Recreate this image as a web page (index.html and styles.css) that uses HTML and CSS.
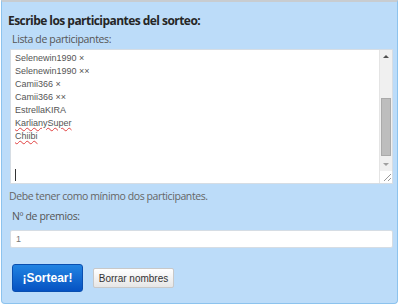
FILE: index.html
```html
<!DOCTYPE html>
<html lang="es">
<head>
<meta charset="utf-8">
<link rel="stylesheet" href="styles.css">
</head>
<body>
<div class="panel">
  <h2 class="title">Escribe los participantes del sorteo:</h2>
  <div class="label">Lista de participantes:</div>
  <div class="textarea">
    <div class="lines">
      <div>Selenewin1990 ×</div>
      <div>Selenewin1990 ××</div>
      <div>Camii366 ×</div>
      <div>Camii366 ××</div>
      <div>EstrellaKIRA</div>
      <div><span class="spell">KarlianySuper</span></div>
      <div><span class="spell">Chiibi</span></div>
      <div class="blank"></div>
      <div class="blank"></div>
      <div><span class="caret"></span></div>
    </div>
    <div class="scrollbar">
      <div class="arrow up"></div>
      <div class="track"><div class="thumb"></div></div>
      <div class="arrow down"></div>
      <div class="grip">
        <svg width="11" height="11" viewBox="0 0 11 11"><path d="M10 3 L3 10 M10 7 L7 10" stroke="#999" stroke-width="1" fill="none"/></svg>
      </div>
    </div>
  </div>
  <p class="note">Debe tener como mínimo dos participantes.</p>
  <div class="label label-prizes">Nº de premios:</div>
  <div class="input">1</div>
  <div class="actions">
    <button class="btn-primary">¡Sortear!</button>
    <button class="btn-secondary">Borrar nombres</button>
  </div>
</div>
</body>
</html>
```
FILE: styles.css
```css
html, body {
  margin: 0;
  padding: 0;
  background: #ffffff;
}
body {
  width: 400px;
  height: 306px;
  overflow: hidden;
}
.panel {
  box-sizing: border-box;
  width: 397px;
  height: 304px;
  margin-left: 1px;
  background: #bcdcf9;
  border: 1px solid #8cc3ee;
  border-top: 2px solid #c8ccd0;
  border-radius: 0 0 4px 4px;
  padding: 0 4px 0 6px;
  font-family: "Open Sans", "DejaVu Sans", sans-serif;
}
.title {
  margin: 0;
  padding-top: 11px;
  font-size: 12px;
  letter-spacing: -0.55px;
  font-weight: bold;
  color: #262626;
  line-height: 16px;
}
.label {
  margin: 3px 0 0 4px;
  font-size: 10.5px;
  letter-spacing: -0.35px;
  line-height: 14px;
  color: #555;
}
.textarea {
  margin-top: 3px;
  margin-left: 2px;
  box-sizing: border-box;
  height: 135px;
  background: #fff;
  border: 1px solid #d6dde4;
  display: flex;
  font-family: "Liberation Sans", Arial, sans-serif;
}
.lines {
  flex: 1;
  padding: 2px 5px 0 4px;
  font-size: 9px;
  line-height: 13px;
  color: #555;
}
.blank { height: 13px; }
.spell {
  text-decoration: underline wavy #e04040;
  text-decoration-thickness: 1px;
  text-underline-offset: 1px;
}
.caret {
  display: inline-block;
  width: 1px;
  height: 12px;
  background: #333;
  vertical-align: -3px;
}
.scrollbar {
  width: 12px;
  display: flex;
  flex-direction: column;
  background: #f0f0f0;
  border-left: 1px solid #e4e4e4;
}
.arrow {
  height: 13px;
  position: relative;
}
.arrow::after {
  content: "";
  position: absolute;
  left: 3px;
  border-left: 3px solid transparent;
  border-right: 3px solid transparent;
}
.arrow.up::after {
  top: 5px;
  border-bottom: 3px solid #505050;
}
.arrow.down::after {
  top: 5px;
  border-top: 3px solid #a0a0a0;
}
.track {
  flex: 1;
  display: flex;
  flex-direction: column;
  justify-content: flex-end;
  padding: 0 1px 2px 1px;
}
.thumb {
  height: 56px;
  background: #bdbdbd;
  border: 1px solid #aaa;
}
.grip {
  height: 12px;
  background: #fff;
  display: flex;
  justify-content: flex-end;
}
.note {
  margin: 5px 0 0 1px;
  font-size: 10.5px;
  letter-spacing: -0.4px;
  line-height: 14px;
  color: #666;
}
.label-prizes {
  margin-top: 6px;
}
.input {
  margin-top: 7px;
  margin-left: 2px;
  box-sizing: border-box;
  height: 18px;
  background: #fff;
  border: 1px solid #d6dde4;
  border-radius: 2px;
  padding: 0 5px;
  font-family: "Liberation Sans", Arial, sans-serif;
  font-size: 9px;
  line-height: 16px;
  color: #777;
}
.actions {
  display: flex;
  align-items: center;
  gap: 10px;
  margin-top: 16px;
  margin-left: 4px;
}
.btn-primary {
  width: 71px;
  height: 28px;
  border: 1px solid #0a4fb0;
  border-radius: 3px;
  background: linear-gradient(#2284e2, #0652c2);
  color: #fff;
  font-family: "Liberation Sans", Arial, sans-serif;
  font-weight: bold;
  font-size: 12px;
  padding: 0;
}
.btn-secondary {
  width: 81px;
  height: 20px;
  border: 1px solid #c8c8c8;
  border-radius: 2px;
  background: linear-gradient(#ffffff, #e6e6e6);
  color: #333;
  font-family: "Liberation Sans", Arial, sans-serif;
  font-size: 10px;
  padding: 0;
}
```
